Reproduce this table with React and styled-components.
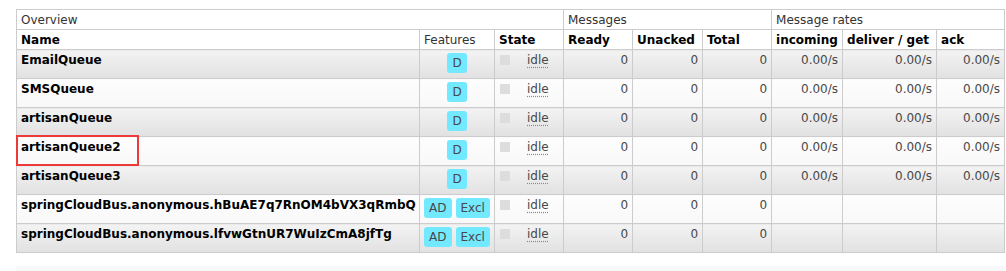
import React from "react";
import styled, { createGlobalStyle } from "styled-components";

const GlobalStyle = createGlobalStyle`
  html, body { margin: 0; padding: 0; background: #fff; }
  body {
    font-family: "DejaVu Sans", Verdana, sans-serif;
    font-size: 12px;
    color: #484848;
  }
`;

const Page = styled.div`
  padding: 9px 0 0 16px;
`;

const TableWrap = styled.div`
  position: relative;
  width: 989px;
`;

const List = styled.table`
  border-collapse: collapse;
  table-layout: fixed;
  width: 989px;
  border-left: 1px solid #ccc;
  border-right: 1px solid #ccc;
`;

const GroupHead = styled.th`
  height: 18px;
  padding: 1px 4px 0;
  text-align: left;
  vertical-align: middle;
  font-weight: normal;
  color: #333;
  border: 1px solid #ccc;
  line-height: 15px;
`;

const ColHead = styled.th`
  height: 18px;
  padding: 1px 4px 0;
  text-align: left;
  vertical-align: middle;
  font-weight: ${(p) => (p.$plain ? "normal" : "bold")};
  color: ${(p) => (p.$plain ? "#333" : "#000")};
  border: 1px solid #ccc;
  white-space: nowrap;
  line-height: 15px;
`;

const Row = styled.tr`
  & > td {
    background: ${(p) =>
      p.$alt
        ? "linear-gradient(#f3f3f3, #e1e1e1)"
        : "linear-gradient(#fdfdfd, #f8f8f8)"};
  }
`;

const Cell = styled.td`
  height: 21px;
  padding: 3px 4px 4px;
  vertical-align: top;
  border: 1px solid #ccc;
  text-align: ${(p) => p.$align || "left"};
  white-space: nowrap;
  overflow: hidden;
`;

const QueueName = styled.span`
  font-weight: bold;
  color: #000;
  line-height: 15px;
`;

const Num = styled.span`
  line-height: 15px;
  color: #484848;
`;

const Features = styled.div`
  display: flex;
  justify-content: center;
  gap: 4px;
`;

const Badge = styled.abbr`
  display: inline-flex;
  align-items: center;
  justify-content: center;
  height: 20px;
  min-width: 20px;
  padding: 0 ${(p) => (p.$wide ? "5px" : "0")};
  box-sizing: border-box;
  background: #73e9ff;
  border-radius: 3px;
  color: #484848;
  text-decoration: none;
  cursor: default;
`;

const StateBox = styled.div`
  display: flex;
  align-items: flex-start;
  gap: 17px;
  padding-left: 1px;
`;

const Dot = styled.span`
  width: 10px;
  height: 10px;
  margin-top: 2px;
  background: #ddd;
  flex: none;
`;

const StateText = styled.abbr`
  line-height: 15px;
  color: #484848;
  text-decoration: underline dotted #888;
  text-underline-offset: 3px;
`;

const Highlight = styled.div`
  position: absolute;
  left: 0;
  top: 126px;
  width: 123px;
  height: 31px;
  box-sizing: border-box;
  border: 2px solid #ec3a3a;
  pointer-events: none;
`;

const NextSection = styled.div`
  margin-top: 13px;
  width: 989px;
  height: 6px;
  background: #f8f8f8;
`;

const widths = [403, 75, 69, 69, 70, 69, 71, 94, 68];

const queues = [
  { name: "EmailQueue", features: ["D"], rates: true },
  { name: "SMSQueue", features: ["D"], rates: true },
  { name: "artisanQueue", features: ["D"], rates: true },
  { name: "artisanQueue2", features: ["D"], rates: true },
  { name: "artisanQueue3", features: ["D"], rates: true },
  {
    name: "springCloudBus.anonymous.hBuAE7q7RnOM4bVX3qRmbQ",
    features: ["AD", "Excl"],
    rates: false,
  },
  {
    name: "springCloudBus.anonymous.lfvwGtnUR7WuIzCmA8jfTg",
    features: ["AD", "Excl"],
    rates: false,
  },
];

const featureTitles = { D: "durable", AD: "auto-delete", Excl: "exclusive" };

export default function App() {
  return (
    <>
      <GlobalStyle />
      <Page>
        <TableWrap>
          <List>
            <colgroup>
              {widths.map((w, i) => (
                <col key={i} style={{ width: w }} />
              ))}
            </colgroup>
            <thead>
              <tr>
                <GroupHead colSpan={3}>Overview</GroupHead>
                <GroupHead colSpan={3}>Messages</GroupHead>
                <GroupHead colSpan={3}>Message rates</GroupHead>
              </tr>
              <tr>
                <ColHead>Name</ColHead>
                <ColHead $plain>Features</ColHead>
                <ColHead>State</ColHead>
                <ColHead>Ready</ColHead>
                <ColHead>Unacked</ColHead>
                <ColHead>Total</ColHead>
                <ColHead>incoming</ColHead>
                <ColHead>deliver / get</ColHead>
                <ColHead>ack</ColHead>
              </tr>
            </thead>
            <tbody>
              {queues.map((q, i) => (
                <Row key={q.name} $alt={i % 2 === 0}>
                  <Cell>
                    <QueueName>{q.name}</QueueName>
                  </Cell>
                  <Cell>
                    <Features>
                      {q.features.map((f) => (
                        <Badge key={f} title={featureTitles[f]} $wide={f.length > 1}>
                          {f}
                        </Badge>
                      ))}
                    </Features>
                  </Cell>
                  <Cell>
                    <StateBox>
                      <Dot />
                      <StateText title="Idle since last check">idle</StateText>
                    </StateBox>
                  </Cell>
                  <Cell $align="right"><Num>0</Num></Cell>
                  <Cell $align="right"><Num>0</Num></Cell>
                  <Cell $align="right"><Num>0</Num></Cell>
                  <Cell $align="right"><Num>{q.rates ? "0.00/s" : ""}</Num></Cell>
                  <Cell $align="right"><Num>{q.rates ? "0.00/s" : ""}</Num></Cell>
                  <Cell $align="right"><Num>{q.rates ? "0.00/s" : ""}</Num></Cell>
                </Row>
              ))}
            </tbody>
          </List>
          <Highlight />
        </TableWrap>
        <NextSection />
      </Page>
    </>
  );
}
